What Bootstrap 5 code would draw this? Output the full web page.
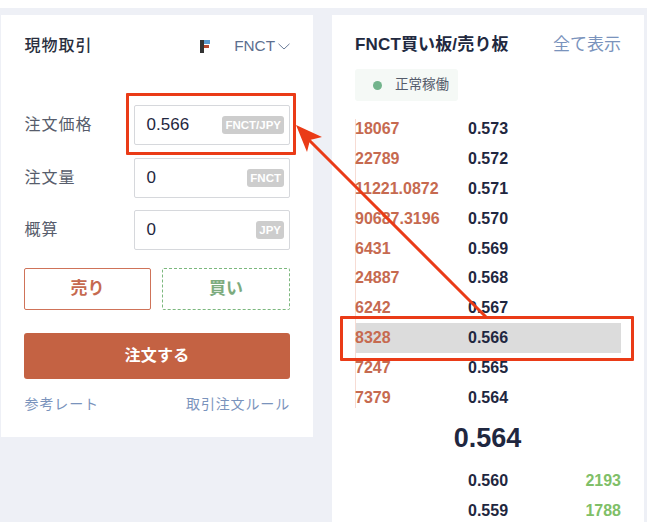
<!DOCTYPE html>
<html lang="ja">
<head>
<meta charset="utf-8">
<link href="https://cdn.jsdelivr.net/npm/bootstrap@5.3.0/dist/css/bootstrap.min.css" rel="stylesheet">
<style>
html,body{margin:0;height:522px;overflow:hidden;background:#fff}
body{font-family:"Liberation Sans","Noto Sans CJK JP",sans-serif;color:#1f2740}
.shot{position:relative;width:654px;height:522px;padding-top:8px}
.stage{width:647px;height:514px;background:#eef0f6;padding:7px 3px 0 1px;gap:19px;overflow:hidden}
.panel-l{width:312px;height:422px;background:#fff;padding:22px 23px 0 23px;flex:none}
.panel-r{width:312px;height:520px;background:#fff;padding:20px 23px 0 23px;flex:none}
.top-l{margin-bottom:50px}
.ttl{font-size:16px;font-weight:500;line-height:18px;height:18px;color:#2a2f3e;letter-spacing:1px;padding-left:.6px}
.pair{font-size:15.3px;color:#5d6f8f;line-height:18px}
.coin{margin-right:24px}
.caret{margin-left:3px}
.frow{height:40px;margin-bottom:12.5px}
.flabel{width:110px;font-size:16px;color:#575d6c;letter-spacing:1px;padding-left:.6px}
.fbox{flex:1;height:40px;border:1px solid #d6d8dc;border-radius:2px;padding:0 5px 0 11.6px;font-size:17px;color:#1f2740}
.unit{background:#cdcdcd;color:#fff;font-size:11.5px;font-weight:700;border-radius:3px;line-height:18px;padding:0 3px}
.choice{margin-top:18px}
.side{height:42px;font-size:17px;font-weight:700;border-radius:2px;padding:0}
.side-sell{width:127px;border:1px solid #cf7359;color:#c66a50}
.side-buy{width:128px;border:1px dashed #7cb87e;color:#7cab7e}
.submit{height:46px;margin-top:23px;background:#c46243;color:#fff;font-size:16px;font-weight:700;border-radius:3px;border:0;padding:0;width:100%;letter-spacing:.3px}
.foot{margin-top:16px;font-size:14px;line-height:18px;color:#7a93bc;letter-spacing:.85px;padding-left:.6px}
.heading{font-size:17px;font-weight:700;line-height:20px;color:#22293f;letter-spacing:.15px}
.all{font-size:17px;line-height:20px;color:#7a93bc}
.status{width:103px;height:32px;margin-top:14px;margin-bottom:13px;background:#f5f9f6;border-radius:3px;font-size:13.5px;color:#555c6b;padding-left:18px}
.dot{width:9px;height:9px;border-radius:50%;background:#72b48c;margin-right:13px}
.book{font-size:16px;font-weight:700}
.asks{position:relative}
.asks::before{content:"";position:absolute;left:0;top:5px;bottom:5px;width:1px;background:#f7dcd4}
.lvl{height:29.9px;line-height:29.9px}
.qty{width:113px;color:#c66a50;flex:none;position:relative}
.px{color:#1f2740}
.hot{background:#dcdcdc}
.last{font-size:27px;font-weight:700;text-align:center;line-height:32px;margin:9px 0 12px;padding-right:1px}
.vol{margin-left:auto;color:#7fbf68}
.spot{position:absolute;border:3px solid #ea3b17;border-radius:1px}
.spot-a{left:126px;top:93px;width:170px;height:62px}
.spot-b{left:340px;top:316px;width:294px;height:45px}
.pointer{position:absolute;left:0;top:0;pointer-events:none}
</style>
</head>
<body>
<div class="shot">
  <div class="stage d-flex">
    <div class="panel-l">
      <div class="d-flex align-items-center justify-content-between top-l">
        <div class="ttl">現物取引</div>
        <div class="d-flex align-items-center pair">
          <svg class="coin" width="10" height="13" viewBox="0 0 10 13"><rect x="0" y="0" width="4" height="13" fill="#333"/><rect x="4" y="0" width="6" height="4" fill="#5b9bd0"/><rect x="4" y="5" width="5" height="3" fill="#b5482f"/></svg>
          <span>FNCT</span>
          <svg class="caret" width="12" height="7" viewBox="0 0 12 7"><path d="M.5.8 6 6 11.5.8" fill="none" stroke="#6b7c99" stroke-width="1"/></svg>
        </div>
      </div>
      <div class="d-flex align-items-center frow"><div class="flabel">注文価格</div><div class="fbox d-flex align-items-center justify-content-between"><span>0.566</span><span class="unit">FNCT/JPY</span></div></div>
      <div class="d-flex align-items-center frow"><div class="flabel">注文量</div><div class="fbox d-flex align-items-center justify-content-between"><span>0</span><span class="unit">FNCT</span></div></div>
      <div class="d-flex align-items-center frow"><div class="flabel">概算</div><div class="fbox d-flex align-items-center justify-content-between"><span>0</span><span class="unit">JPY</span></div></div>
      <div class="d-flex justify-content-between choice">
        <button class="btn side side-sell">売り</button>
        <button class="btn side side-buy">買い</button>
      </div>
      <button class="btn submit">注文する</button>
      <div class="d-flex justify-content-between foot"><span>参考レート</span><span>取引注文ルール</span></div>
    </div>
    <div class="panel-r">
      <div class="d-flex justify-content-between align-items-center"><div class="heading">FNCT買い板/売り板</div><div class="all">全て表示</div></div>
      <div class="status d-flex align-items-center"><span class="dot"></span><span>正常稼働</span></div>
      <div class="book">
        <div class="asks">
        <div class="d-flex lvl"><span class="qty">18067</span><span class="px">0.573</span></div>
        <div class="d-flex lvl"><span class="qty">22789</span><span class="px">0.572</span></div>
        <div class="d-flex lvl"><span class="qty">11221.0872</span><span class="px">0.571</span></div>
        <div class="d-flex lvl"><span class="qty">90687.3196</span><span class="px">0.570</span></div>
        <div class="d-flex lvl"><span class="qty">6431</span><span class="px">0.569</span></div>
        <div class="d-flex lvl"><span class="qty">24887</span><span class="px">0.568</span></div>
        <div class="d-flex lvl"><span class="qty">6242</span><span class="px">0.567</span></div>
        <div class="d-flex lvl hot"><span class="qty">8328</span><span class="px">0.566</span></div>
        <div class="d-flex lvl"><span class="qty">7247</span><span class="px">0.565</span></div>
        <div class="d-flex lvl"><span class="qty">7379</span><span class="px">0.564</span></div>
        </div>
        <div class="last">0.564</div>
        <div class="d-flex lvl"><span class="qty"></span><span class="px">0.560</span><span class="vol">2193</span></div>
        <div class="d-flex lvl"><span class="qty"></span><span class="px">0.559</span><span class="vol">1788</span></div>
      </div>
    </div>
  </div>
  <div class="spot spot-a"></div>
  <div class="spot spot-b"></div>
  <svg class="pointer" width="654" height="522" viewBox="0 0 654 522"><path d="M486 317 308 139" fill="none" stroke="#ea3b17" stroke-width="3"/><path d="M296 125 322 137 310 140 307 152Z" fill="#ea3b17"/></svg>
</div>
</body>
</html>
